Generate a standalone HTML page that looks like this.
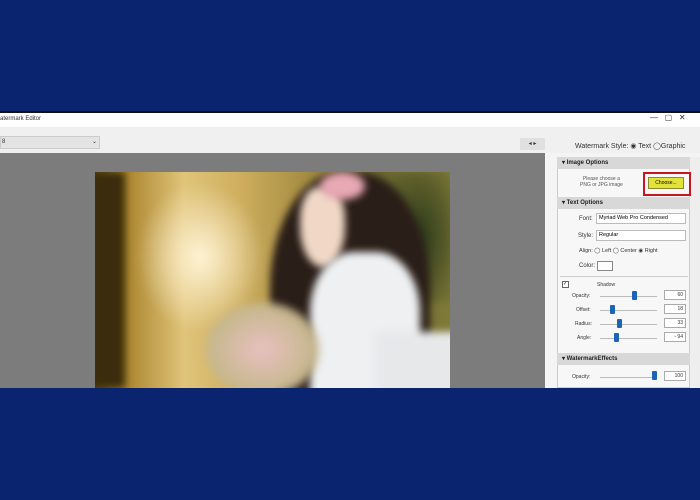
<!DOCTYPE html>
<html><head><style>
*{margin:0;padding:0;box-sizing:border-box}
body{width:700px;height:500px;background:#0a2470;position:relative;overflow:hidden;font-family:"Liberation Sans",sans-serif;}
.a{position:absolute}
.t{font-size:6px;color:#333}
.sl{position:absolute;height:1px;background:#bbb}
.th{position:absolute;width:5px;height:9px;background:#1e64b4;border-radius:1px}
.box{position:absolute;width:22px;height:10px;border:1px solid #aaa;background:#fff;font-size:5px;text-align:right;padding-right:2px;line-height:8px;color:#333}
.hdr{position:absolute;left:557px;width:133px;height:12px;background:#d8d8d8;font-size:6px;font-weight:bold;color:#222;line-height:12px;padding-left:5px}
.b{filter:blur(4px)}
</style></head><body>
<div class="a" style="left:0;top:111px;width:700px;height:2px;background:#111"></div>
<div class="a" style="left:0;top:113px;width:700px;height:14px;background:#fff"></div>
<div class="a t" style="left:0;top:116px;font-size:6px">atermark Editor</div>
<div class="a" style="left:650px;top:113px;font-size:8px;color:#333">—&nbsp;&nbsp;&nbsp;▢&nbsp;&nbsp;&nbsp;✕</div>
<div class="a" style="left:0;top:127px;width:700px;height:26px;background:#f0f0f0"></div>
<div class="a" style="left:0;top:136px;width:100px;height:13px;background:#e4e4e4;border:1px solid #ccc"></div>
<div class="a t" style="left:2px;top:139px">8</div>
<div class="a t" style="left:92px;top:138px">⌄</div>
<div class="a" style="left:520px;top:138px;width:25px;height:12px;background:#e0e0e0;font-size:6px;color:#333;text-align:center;line-height:12px">◂ ▸</div>
<div class="a" style="left:0;top:153px;width:545px;height:235px;background:#7c7c7c"></div>
<div class="a" style="left:545px;top:153px;width:155px;height:235px;background:#f4f4f4"></div>
<div class="a t" style="left:575px;top:142px;font-size:7px">Watermark Style: ◉ Text ◯Graphic</div>
<div class="a" style="left:557px;top:157px;width:133px;height:231px;border:1px solid #ccc;background:#f7f7f7"></div>
<div class="a" style="left:690px;top:157px;width:10px;height:231px;background:#eee"></div>
<div class="hdr" style="top:157px">▾ Image Options</div>
<div class="a t" style="left:580px;top:176px;font-size:5px;text-align:center;color:#555">Please choose a<br>PNG or JPG image</div>
<div class="a" style="left:643px;top:172px;width:48px;height:24px;border:2px solid #c8141e"></div>
<div class="a" style="left:648px;top:177px;width:36px;height:12px;background:#e2e23a;border:1px solid #8a8a30;font-size:5px;line-height:10px;text-align:center">Choose...</div>
<div class="hdr" style="top:197px">▾ Text Options</div>
<div class="a t" style="left:579px;top:216px">Font:</div>
<div class="a" style="left:596px;top:213px;width:90px;height:11px;border:1px solid #bbb;background:#fff;font-size:5.5px;line-height:9px;padding-left:2px">Myriad Web Pro Condensed</div>
<div class="a t" style="left:578px;top:233px">Style:</div>
<div class="a" style="left:596px;top:230px;width:90px;height:11px;border:1px solid #bbb;background:#fff;font-size:5.5px;line-height:9px;padding-left:2px">Regular</div>
<div class="a t" style="left:579px;top:248px;font-size:5.5px">Align: ◯ Left ◯ Center ◉ Right</div>
<div class="a t" style="left:579px;top:263px">Color:</div>
<div class="a" style="left:597px;top:261px;width:16px;height:10px;border:1px solid #888;background:#fff"></div>
<div class="a" style="left:560px;top:276px;width:128px;height:1px;background:#ccc"></div>
<div class="a" style="left:562px;top:281px;width:7px;height:7px;border:1px solid #666;background:#fff;font-size:5px;line-height:5px">✓</div>
<div class="a t" style="left:597px;top:282px;font-size:5px">Shadow</div>
<div class="a t" style="left:572px;top:293px;font-size:5px">Opacity:</div><div class="sl" style="left:600px;top:296px;width:57px"></div><div class="th" style="left:632px;top:291px"></div><div class="box" style="left:664px;top:290px">60</div>
<div class="a t" style="left:576px;top:307px;font-size:5px">Offset:</div><div class="sl" style="left:600px;top:310px;width:57px"></div><div class="th" style="left:610px;top:305px"></div><div class="box" style="left:664px;top:304px">18</div>
<div class="a t" style="left:575px;top:321px;font-size:5px">Radius:</div><div class="sl" style="left:600px;top:324px;width:57px"></div><div class="th" style="left:617px;top:319px"></div><div class="box" style="left:664px;top:318px">33</div>
<div class="a t" style="left:577px;top:335px;font-size:5px">Angle:</div><div class="sl" style="left:600px;top:338px;width:57px"></div><div class="th" style="left:614px;top:333px"></div><div class="box" style="left:664px;top:332px">- 94</div>
<div class="hdr" style="top:353px">▾ WatermarkEffects</div>
<div class="a t" style="left:572px;top:374px;font-size:5px">Opacity:</div><div class="sl" style="left:600px;top:377px;width:57px"></div><div class="th" style="left:652px;top:371px"></div><div class="box" style="left:664px;top:371px">100</div>
<!-- photo -->
<div class="a" style="left:95px;top:172px;width:355px;height:216px;overflow:hidden;background:linear-gradient(90deg,#5a4a18 0%,#a8822a 8%,#e0c47a 25%,#d0b060 40%,#b09448 55%,#6d6a30 80%,#807a38 100%)">
 <div class="a b" style="left:40px;top:10px;width:130px;height:150px;border-radius:50%;background:radial-gradient(#fff3d4,rgba(240,220,150,0) 70%);"></div>
 <div class="a b" style="left:-5px;top:0;width:35px;height:216px;background:#3a2c0c"></div>
 <div class="a b" style="left:290px;top:0;width:70px;height:130px;background:radial-gradient(#2c3a1a,rgba(60,70,30,0))"></div>
 <div class="a b" style="left:175px;top:0;width:160px;height:260px;border-radius:45% 45% 30% 30%;background:#2a1e18;"></div>
 <div class="a b" style="left:205px;top:15px;width:45px;height:80px;border-radius:40% 40% 50% 50%;background:#f1d8c6"></div>
 <div class="a b" style="left:225px;top:0;width:45px;height:28px;border-radius:50%;background:#e8a8b4"></div>
 <div class="a b" style="left:215px;top:80px;width:110px;height:150px;border-radius:40% 40% 0 0;background:#eef0f2"></div>
 <div class="a b" style="left:280px;top:160px;width:90px;height:70px;background:#e6e8ea"></div>
 <div class="a b" style="left:110px;top:130px;width:115px;height:95px;border-radius:50%;background:radial-gradient(#e8c0c0,#c8b890 60%,rgba(150,150,90,0))"></div>
</div>
<div class="a" style="left:0;top:388px;width:700px;height:112px;background:#0a2470"></div>
</body></html>
